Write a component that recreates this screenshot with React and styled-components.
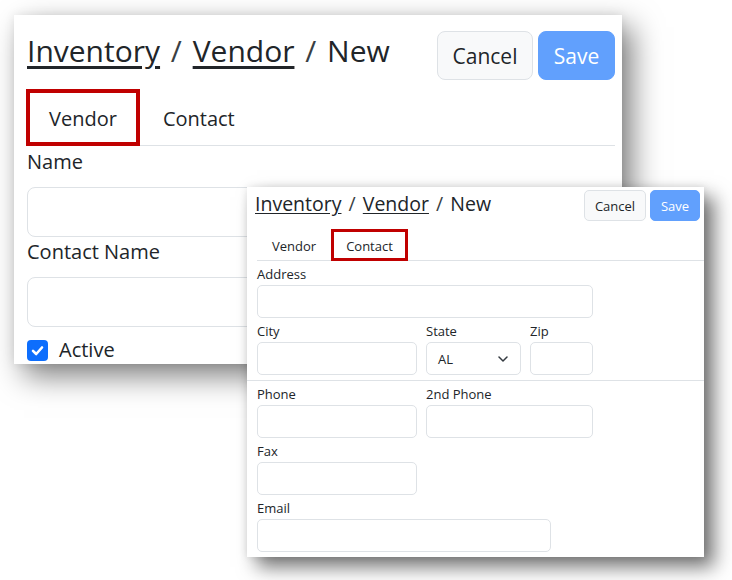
import React from "react";
import styled, { createGlobalStyle, ThemeProvider } from "styled-components";

const Global = createGlobalStyle`
  html, body { margin: 0; padding: 0; background: #fff; }
  body { font-family: "Open Sans", "Noto Sans", sans-serif; color: #212529; }
  * { box-sizing: border-box; }
`;

const large = {
  x: 14, y: 15, w: 608, h: 349,
  shadow: "10px 12px 28px rgba(0,0,0,0.5), 0 0 10px rgba(0,0,0,0.08)",
  headerPad: "16px 7px 0 13px",
  titleSize: 30, titleLH: 36, titleMT: 2, titleWS: 3,
  btnH: 49, btnFont: 21, btnRadius: 8, btnGap: 5, cancelW: 96, saveW: 77,
  tabsMargin: "9px 7px 0 12px",
  tabBorder: 4, tabPadX: 19, tabPadTop: 2, tabLH: 47, tabFont: 20,
  bodyPad: "1px 7px 0 13px",
  labelFont: 20, labelLH: 30, labelMB: 10, fieldGap: 0,
  inputH: 50, inputRadius: 8,
};

const small = {
  x: 247, y: 187, w: 457, h: 370,
  shadow: "10px 10px 18px rgba(0,0,0,0.55), 0 0 8px rgba(0,0,0,0.1)",
  headerPad: "3px 4px 0 8px",
  titleSize: 19.5, titleLH: 24, titleMT: 2, titleWS: 2,
  btnH: 31, btnFont: 13, btnRadius: 5, btnGap: 4, cancelW: 62, saveW: 50,
  tabsMargin: "8px 0 0 10px",
  tabBorder: 3, tabPadX: 12, tabPadTop: 2, tabLH: 24, tabFont: 13,
  bodyPad: "5px 10px 0 10px",
  labelFont: 13, labelLH: 16, labelMB: 3, fieldGap: 5,
  inputH: 33, inputRadius: 5,
};

const Canvas = styled.div`
  position: relative;
  width: 732px;
  height: 580px;
  overflow: hidden;
  background: #fff;
`;

const Window = styled.div`
  position: absolute;
  left: ${(p) => p.theme.x}px;
  top: ${(p) => p.theme.y}px;
  width: ${(p) => p.theme.w}px;
  height: ${(p) => p.theme.h}px;
  background: #fff;
  overflow: hidden;
  box-shadow: ${(p) => p.theme.shadow};
  display: flex;
  flex-direction: column;
`;

const Header = styled.div`
  display: flex;
  justify-content: space-between;
  align-items: flex-start;
  padding: ${(p) => p.theme.headerPad};
`;

const Title = styled.h1`
  margin: ${(p) => p.theme.titleMT}px 0 0 0;
  font-weight: 400;
  font-size: ${(p) => p.theme.titleSize}px;
  line-height: ${(p) => p.theme.titleLH}px;
  word-spacing: ${(p) => p.theme.titleWS}px;
  color: #212529;
  white-space: nowrap;
`;

const Crumb = styled.a`
  color: #212529;
  text-decoration: underline;
  text-underline-offset: 0.12em;
`;

const Sep = styled.span`
  color: #3a3f44;
`;

const Buttons = styled.div`
  display: flex;
  gap: ${(p) => p.theme.btnGap}px;
`;

const Button = styled.button`
  height: ${(p) => p.theme.btnH}px;
  width: ${(p) => (p.$primary ? p.theme.saveW : p.theme.cancelW)}px;
  font-family: inherit;
  font-size: ${(p) => p.theme.btnFont}px;
  border-radius: ${(p) => p.theme.btnRadius}px;
  border: 1px solid ${(p) => (p.$primary ? "#61a0fd" : "#dee2e6")};
  background: ${(p) => (p.$primary ? "#61a0fd" : "#f8f9fa")};
  color: ${(p) => (p.$primary ? "#fff" : "#212529")};
  padding: 0;
`;

const Tabs = styled.div`
  display: flex;
  margin: ${(p) => p.theme.tabsMargin};
  border-bottom: 1px solid #dee2e6;
`;

const Tab = styled.div`
  border: ${(p) => p.theme.tabBorder}px solid ${(p) => (p.$marked ? "#c00000" : "transparent")};
  padding: ${(p) => p.theme.tabPadTop}px ${(p) => p.theme.tabPadX}px 0;
  line-height: ${(p) => p.theme.tabLH}px;
  font-size: ${(p) => p.theme.tabFont}px;
  margin-bottom: -1px;
  background: ${(p) => (p.$marked ? "#fff" : "transparent")};
  color: #212529;
`;

const Body = styled.div`
  display: flex;
  flex-direction: column;
  gap: ${(p) => p.theme.fieldGap}px;
  padding: ${(p) => p.theme.bodyPad};
`;

const Field = styled.div`
  display: flex;
  flex-direction: column;
  width: ${(p) => (p.$w ? `${p.$w}px` : "auto")};
`;

const Label = styled.label`
  font-size: ${(p) => p.theme.labelFont}px;
  line-height: ${(p) => p.theme.labelLH}px;
  margin-bottom: ${(p) => p.theme.labelMB}px;
  color: #212529;
`;

const Input = styled.div`
  height: ${(p) => p.theme.inputH}px;
  border: 1px solid #dee2e6;
  border-radius: ${(p) => p.theme.inputRadius}px;
  background: #fff;
`;

const Select = styled(Input)`
  display: flex;
  align-items: center;
  justify-content: space-between;
  padding: 0 12px 0 11px;
  font-size: ${(p) => p.theme.labelFont}px;
`;

const Row = styled.div`
  display: grid;
  grid-template-columns: ${(p) => p.$cols};
  column-gap: 9px;
`;

const Rule = styled.div`
  height: 1px;
  background: #dee2e6;
  margin: 0 -10px;
`;

const CheckRow = styled.div`
  display: flex;
  align-items: center;
  gap: 11px;
  margin-top: 8px;
  font-size: 20px;
  line-height: 30px;
`;

const Box = styled.span`
  width: 21px;
  height: 21px;
  border-radius: 4px;
  background: #0d6efd;
  display: flex;
  align-items: center;
  justify-content: center;
`;

function Chevron() {
  return (
    <svg width="10" height="6" viewBox="0 0 10 6">
      <polyline points="1,1 5,5 9,1" fill="none" stroke="#343a40" strokeWidth="1.5" strokeLinecap="round" strokeLinejoin="round" />
    </svg>
  );
}

function Check() {
  return (
    <svg width="15" height="15" viewBox="0 0 15 15">
      <polyline points="3,7.8 6.2,11 12,4.5" fill="none" stroke="#fff" strokeWidth="2.6" strokeLinecap="round" strokeLinejoin="round" />
    </svg>
  );
}

function Head() {
  return (
    <Header>
      <Title>
        <Crumb>Inventory</Crumb> <Sep>/</Sep> <Crumb>Vendor</Crumb> <Sep>/</Sep> New
      </Title>
      <Buttons>
        <Button>Cancel</Button>
        <Button $primary>Save</Button>
      </Buttons>
    </Header>
  );
}

function VendorWindow() {
  return (
    <ThemeProvider theme={large}>
      <Window>
        <Head />
        <Tabs>
          <Tab $marked>Vendor</Tab>
          <Tab>Contact</Tab>
        </Tabs>
        <Body>
          <Field>
            <Label>Name</Label>
            <Input />
          </Field>
          <Field>
            <Label>Contact Name</Label>
            <Input />
          </Field>
          <CheckRow>
            <Box>
              <Check />
            </Box>
            Active
          </CheckRow>
        </Body>
      </Window>
    </ThemeProvider>
  );
}

function ContactWindow() {
  return (
    <ThemeProvider theme={small}>
      <Window>
        <Head />
        <Tabs>
          <Tab>Vendor</Tab>
          <Tab $marked>Contact</Tab>
        </Tabs>
        <Body>
          <Field $w={336}>
            <Label>Address</Label>
            <Input />
          </Field>
          <Row $cols="160px 95px 63px">
            <Field>
              <Label>City</Label>
              <Input />
            </Field>
            <Field>
              <Label>State</Label>
              <Select>
                AL
                <Chevron />
              </Select>
            </Field>
            <Field>
              <Label>Zip</Label>
              <Input />
            </Field>
          </Row>
          <Rule />
          <Row $cols="160px 167px">
            <Field>
              <Label>Phone</Label>
              <Input />
            </Field>
            <Field>
              <Label>2nd Phone</Label>
              <Input />
            </Field>
          </Row>
          <Field $w={160}>
            <Label>Fax</Label>
            <Input />
          </Field>
          <Field $w={294}>
            <Label>Email</Label>
            <Input />
          </Field>
        </Body>
      </Window>
    </ThemeProvider>
  );
}

export default function App() {
  return (
    <>
      <Global />
      <Canvas>
        <VendorWindow />
        <ContactWindow />
      </Canvas>
    </>
  );
}
